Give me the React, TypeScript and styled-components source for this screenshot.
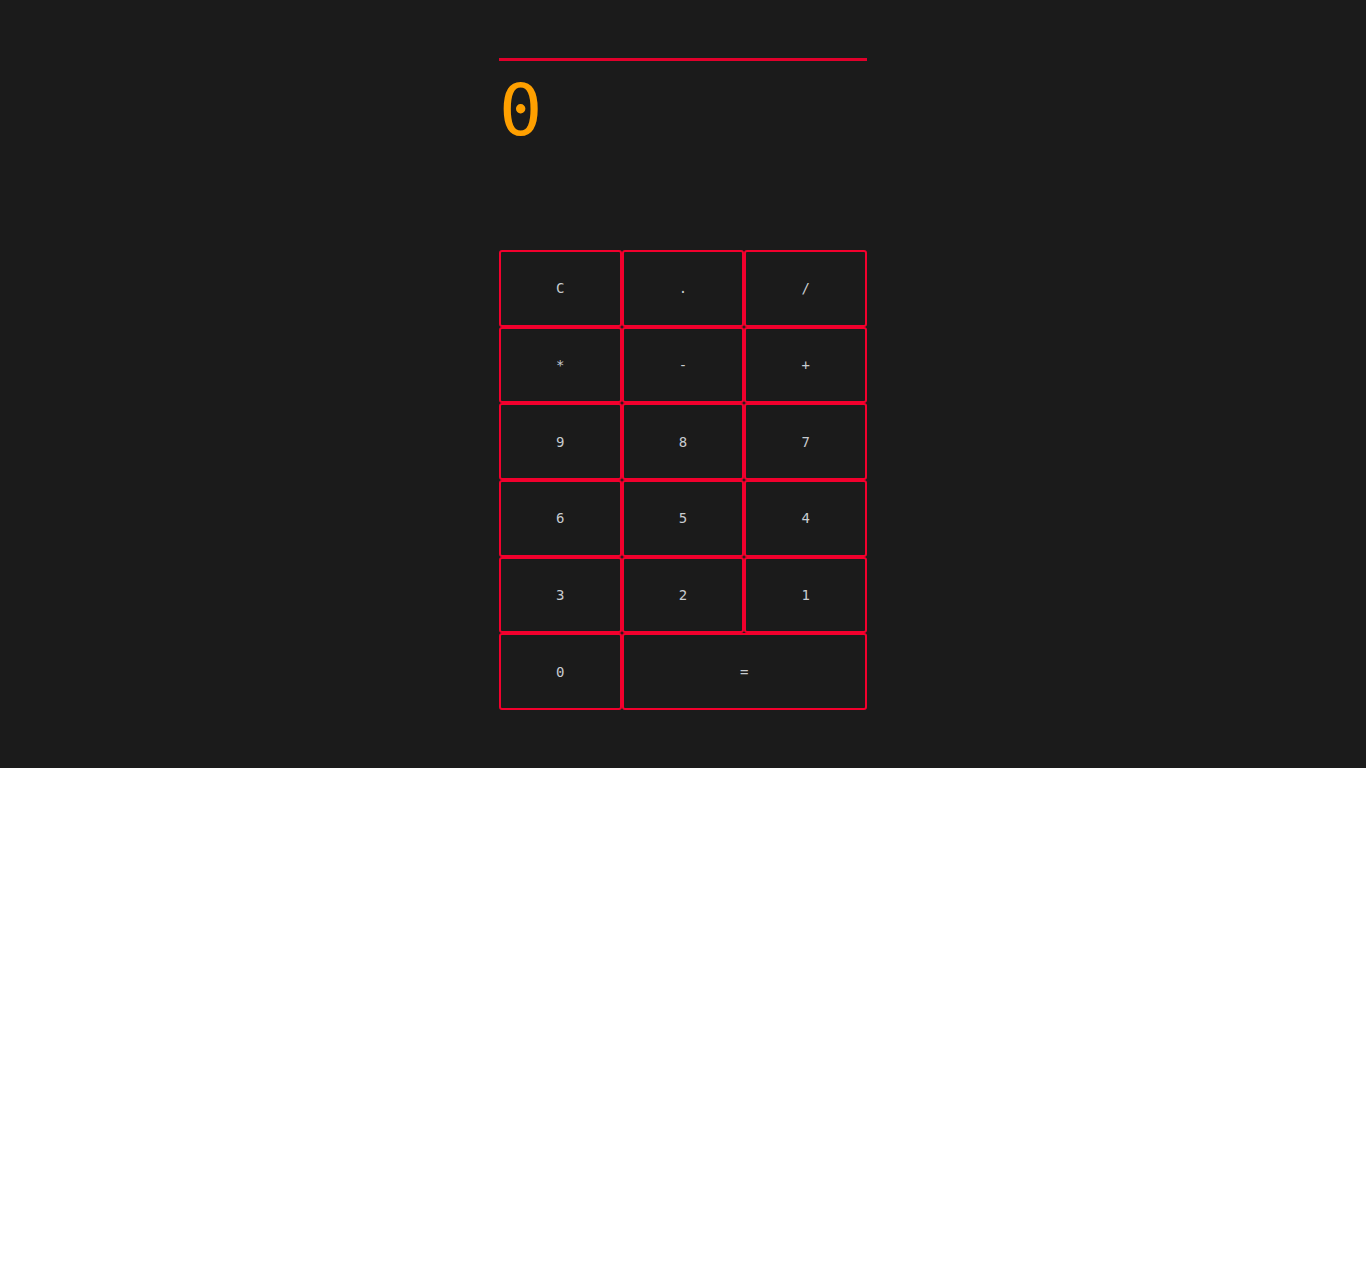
import React, { useState } from "react";
import styled, { createGlobalStyle } from "styled-components";

const GlobalStyle = createGlobalStyle`
  html, body { margin: 0; padding: 0; background: #ffffff; }
`;

const Page = styled.div`
  background: #1b1b1b;
  height: 768px;
  padding-top: 58px;
  box-sizing: border-box;
  display: flex;
  justify-content: center;
`;

const Calculator = styled.div`
  width: 368px;
  display: flex;
  flex-direction: column;
`;

const Display = styled.div`
  border-top: 3px solid #e0002b;
  height: 192px;
  box-sizing: border-box;
  color: #ffa000;
  font-family: "DejaVu Sans Mono", "Liberation Mono", monospace;
  font-size: 72px;
  line-height: 98px;
`;

const Keypad = styled.div`
  display: grid;
  grid-template-columns: repeat(3, 1fr);
  grid-auto-rows: 76.67px;
`;

const Key = styled.button<{ $span?: number }>`
  grid-column: span ${(p) => p.$span ?? 1};
  background: transparent;
  border: 2px solid #f2002d;
  border-radius: 3px;
  color: #c8ccd0;
  font-family: "DejaVu Sans Mono", "Liberation Mono", monospace;
  font-size: 14px;
  padding: 0;
  margin: 0;
  cursor: pointer;
`;

const keys: { label: string; span?: number }[] = [
  { label: "C" }, { label: "." }, { label: "/" },
  { label: "*" }, { label: "-" }, { label: "+" },
  { label: "9" }, { label: "8" }, { label: "7" },
  { label: "6" }, { label: "5" }, { label: "4" },
  { label: "3" }, { label: "2" }, { label: "1" },
  { label: "0" }, { label: "=", span: 2 },
];

export default function App() {
  const [value] = useState("0");
  return (
    <>
      <GlobalStyle />
      <Page>
        <Calculator>
          <Display>{value}</Display>
          <Keypad>
            {keys.map((k) => (
              <Key key={k.label} $span={k.span}>{k.label}</Key>
            ))}
          </Keypad>
        </Calculator>
      </Page>
    </>
  );
}
